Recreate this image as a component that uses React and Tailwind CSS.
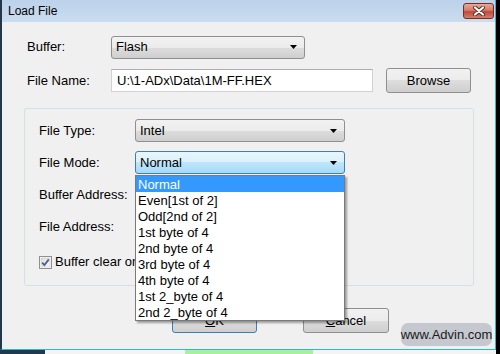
import React from "react";

const Arrow = () => (
  <svg width="7" height="4" viewBox="0 0 7 4" className="shrink-0">
    <path d="M0 0H7L3.5 4Z" fill="#000" />
  </svg>
);

function Select({ value, width, focused }) {
  return (
    <div
      className={
        "h-[23px] flex items-center justify-between pl-[4px] pr-[7px] rounded-[3px] border text-[13px] text-black " +
        (focused
          ? "border-[#3c7fb1] bg-[linear-gradient(to_bottom,#eaf6fd_0%,#d9f0fc_50%,#bee6fd_50%,#a7d9f5_100%)]"
          : "border-[#8e8f8f] bg-[linear-gradient(to_bottom,#f2f2f2_0%,#ebebeb_50%,#dddddd_50%,#cfcfcf_100%)]")
      }
      style={{ width }}
    >
      <span>{value}</span>
      <Arrow />
    </div>
  );
}

function Button({ children, focused, width }) {
  return (
    <div
      className={
        "h-[25px] flex items-center justify-center rounded-[3px] border text-[13px] text-black bg-[linear-gradient(to_bottom,#f2f2f2_0%,#ebebeb_50%,#dddddd_50%,#cfcfcf_100%)] " +
        (focused ? "border-[#3c7fb1]" : "border-[#8e8f8f]")
      }
      style={{ width }}
    >
      {children}
    </div>
  );
}

const items = [
  "Normal",
  "Even[1st of 2]",
  "Odd[2nd of 2]",
  "1st byte of 4",
  "2nd byte of 4",
  "3rd byte of 4",
  "4th byte of 4",
  "1st 2_byte of 4",
  "2nd 2_byte of 4",
];

export default function App() {
  return (
    <div className="w-[500px] h-[354px] overflow-hidden bg-black flex flex-col font-['Liberation_Sans',Arial,sans-serif] relative">
      <div className="flex h-[350px] shrink-0">
        <div className="w-[496px] h-[350px] flex flex-col border-l-2 border-l-[#24384a] border-r border-r-[#2fb4e0] border-b border-b-[#2fb4e0]">
          {/* Title bar */}
          <div className="h-[22px] shrink-0 flex items-center justify-between pl-[6px] pr-[1px] bg-[linear-gradient(to_bottom,#bcd2ea,#cadcef)]">
            <span className="text-[12px] text-black leading-none">Load File</span>
            <div className="w-[31px] h-[16px] rounded-[3px] border border-[#7a2c20] bg-[linear-gradient(to_bottom,#e9a99b_0%,#d47a68_45%,#c4463a_55%,#d0806c_100%)] flex items-center justify-center">
              <svg width="14" height="10" viewBox="0 0 14 10">
                <path d="M3 1.5L11 8.5M11 1.5L3 8.5" stroke="#5a2a22" strokeWidth="4" strokeLinecap="round" />
                <path d="M3 1.5L11 8.5M11 1.5L3 8.5" stroke="#fff" strokeWidth="2.2" strokeLinecap="round" />
              </svg>
            </div>
          </div>
          {/* Body */}
          <div className="flex-1 bg-[#f0f0f0] pl-[22px] flex flex-col">
            <div className="mt-[14px] ml-[3px] flex items-center h-[22px]">
              <span className="w-[84px] text-[13px] text-black">Buffer:</span>
              <Select value="Flash" width={194} />
            </div>
            <div className="mt-[10px] ml-[3px] flex items-center h-[25px]">
              <span className="w-[84px] text-[13px] text-black">File Name:</span>
              <div className="w-[262px] h-[23px] bg-white border border-[#cfd3d9] border-t-[#abadb3] flex items-center pl-[5px] text-[13px] text-black">
                U:\1-ADx\Data\1M-FF.HEX
              </div>
              <div className="ml-[13px]">
                <Button width={85}>Browse</Button>
              </div>
            </div>
            {/* Group box */}
            <div className="mt-[15px] w-[450px] h-[178px] rounded-[3px] border border-[#d5dfe5] pl-[14px] pt-[10px] flex flex-col">
              <div className="flex items-center h-[23px]">
                <span className="w-[96px] text-[13px] text-black">File Type:</span>
                <Select value="Intel" width={210} />
              </div>
              <div className="mt-[9px] flex items-center h-[23px]">
                <span className="w-[96px] text-[13px] text-black">File Mode:</span>
                <Select value="Normal" width={210} focused />
              </div>
              <div className="mt-[9px] flex items-center h-[23px]">
                <span className="w-[96px] text-[13px] text-black">Buffer Address:</span>
              </div>
              <div className="mt-[9px] flex items-center h-[23px]">
                <span className="w-[96px] text-[13px] text-black">File Address:</span>
              </div>
              <div className="mt-[15px] flex items-center h-[18px]">
                <svg width="13" height="13" viewBox="0 0 13 13" className="shrink-0">
                  <defs>
                    <linearGradient id="cb" x1="0" y1="0" x2="1" y2="1">
                      <stop offset="0" stopColor="#dcdcdc" />
                      <stop offset="1" stopColor="#fbfbfb" />
                    </linearGradient>
                  </defs>
                  <rect x="0.5" y="0.5" width="12" height="12" fill="#fff" stroke="#8f8f8f" />
                  <rect x="2" y="2" width="9" height="9" fill="url(#cb)" stroke="#c3c3c3" strokeWidth="0.6" />
                  <path d="M3.2 6.6L5.4 9L9.8 3.4" stroke="#4a5f97" strokeWidth="1.8" fill="none" />
                </svg>
                <span className="ml-[3px] text-[13px] text-black">Buffer clear on load</span>
              </div>
            </div>
            {/* Buttons */}
            <div className="mt-[22px] ml-[148px] flex items-center">
              <Button width={85} focused>
                <span><span className="underline">O</span>K</span>
              </Button>
              <div className="ml-[46px]">
                <Button width={86}>
                  <span><span className="underline">C</span>ancel</span>
                </Button>
              </div>
            </div>
          </div>
        </div>
      </div>
      {/* bottom strip of desktop */}
      <div className="flex h-[4px] shrink-0">
        <div className="w-[45px] bg-[#1f3a4f]" />
        <div className="w-[140px] bg-[#f4f4f4]" />
        <div className="w-[128px] bg-[#a8f0a0]" />
        <div className="w-[183px] bg-[#f4f4f4]" />
        <div className="flex-1 bg-black" />
      </div>

      {/* Dropdown list overlay */}
      <div className="absolute left-[135px] top-[175px] w-[210px] bg-white border border-[#7a7a7a] shadow-[2px_2px_2px_rgba(0,0,0,0.35)] flex flex-col">
        {items.map((it, i) => (
          <div
            key={it}
            className={
              "h-[16px] flex items-center pl-[2px] text-[13px] leading-none " +
              (i === 0 ? "bg-[#3399ff] text-white" : "text-black")
            }
          >
            {it}
          </div>
        ))}
      </div>

      {/* Watermark */}
      <div className="absolute left-[401px] top-[323px] w-[91px] h-[23px] rounded-[7px] bg-[#c6c8d0] flex items-center justify-center text-[13px] text-[#1a1a1a]">
        www.Advin.com
      </div>
    </div>
  );
}
